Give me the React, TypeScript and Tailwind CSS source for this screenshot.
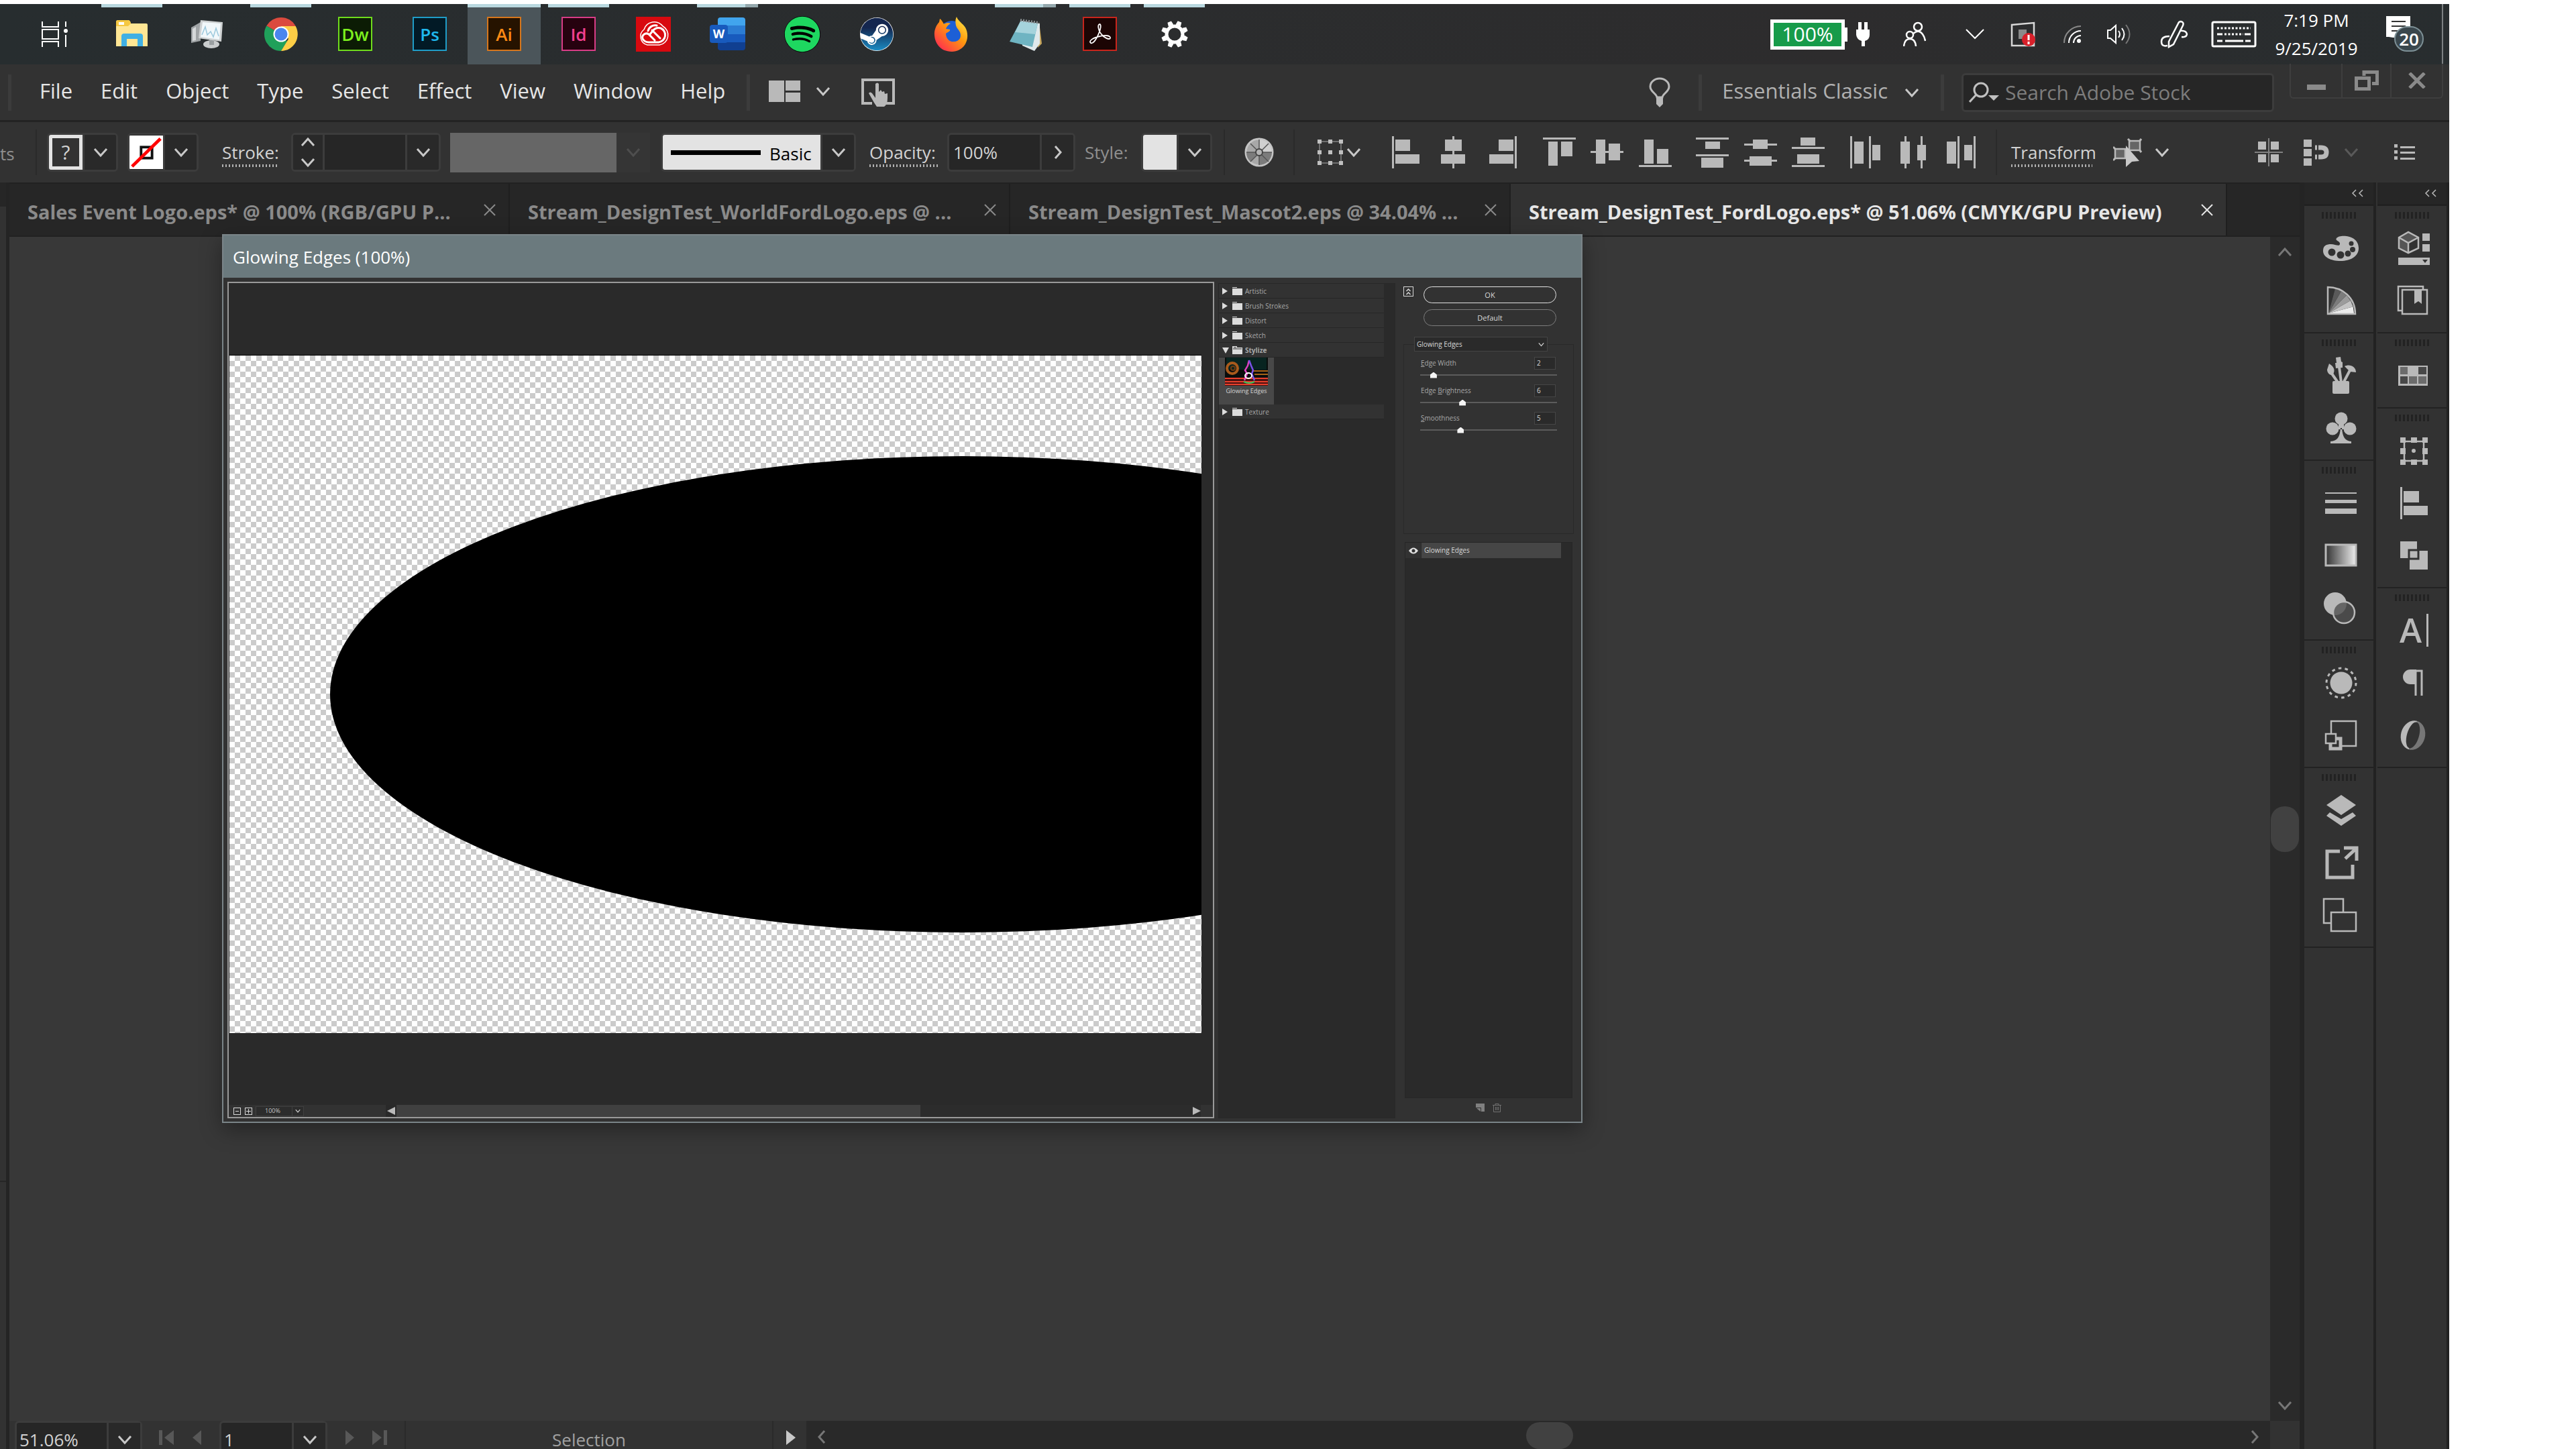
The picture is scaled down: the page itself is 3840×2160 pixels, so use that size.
import type { ReactNode } from 'react';
import { clsx } from 'clsx';
import { FaSpotify, FaSteam } from 'react-icons/fa';

type Rect = [number, number, number, number];

/* ---------- shared bits ---------- */

const CHEVRONS = {
  down: 'M2 6 L11 16 L20 6',
  up: 'M2 16 L11 6 L20 16',
  left: 'M15 2 L7 11 L15 20',
  right: 'M7 2 L15 11 L7 20',
};

function Chevron({ dir = 'down', className = 'size-[22px] text-[#c8c8c8]' }: { dir?: keyof typeof CHEVRONS; className?: string }) {
  return (
    <svg viewBox="0 0 22 22" className={clsx('shrink-0', className)} fill="none" stroke="currentColor" strokeWidth="3" aria-hidden="true">
      <path d={CHEVRONS[dir]} />
    </svg>
  );
}

function Divider({ className }: { className?: string }) {
  return <span className={clsx('shrink-0 w-[2px] h-[68px] bg-[#2a2a2a]', className)} />;
}

function MenuDivider({ className }: { className?: string }) {
  return <span className={clsx('shrink-0 w-[5px] h-[54px] bg-[#3c3c3c]', className)} />;
}

function DottedLabel({ children, className }: { children: ReactNode; className?: string }) {
  return (
    <span className={clsx('shrink-0 flex flex-col pt-1 text-[#d2d2d2]', className)}>
      <span className="leading-9">{children}</span>
      <span className="h-1 bg-[repeating-linear-gradient(90deg,#b0b0b0_0_2px,transparent_2px_5px)]" />
    </span>
  );
}

/* ---------- taskbar ---------- */

function AdobeTile({ text, className }: { text: string; className: string }) {
  return (
    <span className={clsx('size-[51px] border-2 flex items-center justify-center text-[26px] leading-none font-semibold', className)}>
      {text}
    </span>
  );
}

function TaskViewIcon() {
  return (
    <svg className="mr-2" width="44" height="42" viewBox="0 0 44 42" fill="none" stroke="#fff" strokeWidth="2">
      <path d="M3 2v8h24V2M3 40v-8h24v8M3 14h24v14H3zM38 2v8M38 22v18" />
      <circle cx="38" cy="16" r="3" fill="#fff" stroke="none" />
    </svg>
  );
}

function ExplorerIcon() {
  return (
    <svg width="52" height="52" viewBox="0 0 52 52">
      <path d="M2 8q0-3 3-3h15q3 0 4 5h23q2 0 2 2v32H2z" fill="#ffe694" />
      <path d="M2 8q0-3 3-3h15q3 0 4 5l-4 4H2z" fill="#f5c842" />
      <rect x="6" y="8" width="8" height="4" fill="#fff" />
      <path d="M10 44V29q0-4 4-4h24q4 0 4 4v15h-8V33H18v11z" fill="#40b0e4" />
    </svg>
  );
}

function MonitorIcon() {
  return (
    <svg width="52" height="52" viewBox="0 0 52 52">
      <path d="M3 16l14-8v28L3 39z" fill="#9fa3a5" />
      <path d="M5 18l5-3v20l-5 1z" fill="#d5d8d9" />
      <ellipse cx="33" cy="41" rx="12" ry="6" fill="#c9cccd" />
      <path d="M30 34h7v8h-7z" fill="#9a9fa1" />
      <path d="M17 5l33 3-2 29-34-5z" fill="#cfd2d3" />
      <path d="M20 8l27 2-2 24-28-4z" fill="#f2f8fb" />
      <path d="M19 27l5-12 3 12 5-5 4 8 4-13 4 12" fill="none" stroke="#9cc8dc" strokeWidth="1.500" />
    </svg>
  );
}

function ChromeIcon() {
  return (
    <svg width="52" height="52" viewBox="0 0 52 52">
      <path d="M26 26L4.300 13.500A25 25 0 0 1 47.700 13.500z" fill="#db4a3e" />
      <path d="M26 26L4.300 13.500A25 25 0 0 0 26 51l9-14z" fill="#1fa05a" />
      <path d="M26 14h21.700A25 25 0 0 1 26 51l11-18z" fill="#fdce46" />
      <circle cx="26" cy="26" r="11.500" fill="#fff" />
      <circle cx="26" cy="26" r="9.500" fill="#4a86ee" />
    </svg>
  );
}

function CreativeCloudIcon() {
  return (
    <svg width="52" height="52" viewBox="0 0 52 52">
      <rect width="52" height="52" fill="#d8090f" />
      <g fill="none" stroke="#fff" strokeLinecap="round">
        <path d="M28 35l-9-9a6 6 0 0 0-9 7q3 5 9 5h15a11 11 0 0 0 3-21q-7-2-12 4l-4 5" strokeWidth="3" />
        <path d="M24 20l12 12M18 21a11 11 0 0 1 13-8" strokeWidth="3" />
        <path d="M17 42A13 13 0 0 1 12 19 16 16 0 0 1 40 14a15 15 0 0 1-5 28z" strokeWidth="1.500" />
      </g>
    </svg>
  );
}

function WordIcon() {
  return (
    <span className="relative flex items-center w-[53px] h-[49px]">
      <span className="ml-auto w-[41px] h-full rounded-sm overflow-hidden flex flex-col">
        <span className="flex-1 bg-[#41a5ee]" />
        <span className="flex-1 bg-[#2b7cd3]" />
        <span className="flex-1 bg-[#185abd]" />
        <span className="flex-1 bg-[#103f91]" />
      </span>
      <span className="absolute left-0 top-[11px] size-[27px] rounded-sm bg-[#185abd] text-white text-[18px] leading-[26px] font-bold text-center">W</span>
    </span>
  );
}

function FirefoxIcon() {
  return (
    <svg width="52" height="54" viewBox="0 0 52 54">
      <defs>
        <linearGradient id="fox" x1="1" y1="0" x2="0.100" y2="1">
          <stop offset="0" stopColor="#fff24f" />
          <stop offset="0.450" stopColor="#ff980e" />
          <stop offset="1" stopColor="#ff2058" />
        </linearGradient>
      </defs>
      <circle cx="27" cy="27" r="20" fill="#1d5fd6" />
      <path d="M34 1c2 6 9 10 13 16 7 12 3 35-20 36C8 53 0 38 1 24 2 17 5 12 8 9l1-5c2 1 4 4 6 8 3-2 7-2 10-1-4 2-6 5-7 8l6 1c1 3-4 4-6 6 0 8 6 13 12 12 8 0 12-7 9-14-2-4-5-6-6-10-1-5-1-9 1-13z" fill="url(#fox)" />
    </svg>
  );
}

function SteamIcon() {
  return (
    <span className="relative size-[50px] rounded-full bg-white">
      <svg width="0" height="0" className="absolute">
        <linearGradient id="steam" x1="0" y1="0" x2="0" y2="1">
          <stop offset="0.300" stopColor="#14264f" />
          <stop offset="1" stopColor="#1a8cc4" />
        </linearGradient>
      </svg>
      <FaSteam className="size-[50px]" fill="url(#steam)" />
    </span>
  );
}

function NotepadIcon() {
  return (
    <svg width="52" height="52" viewBox="0 0 52 52">
      <path d="M46 8l4 32-6 6z" fill="#c8a860" />
      <path d="M20 6l27 4v30l-8 11-18-8z" fill="#dfe9ec" />
      <path d="M18 7l26 3-8 35L2 37z" fill="#6fb4c2" />
      <path d="M18 7l26 3-4 16-30-3z" fill="#a5d3dc" />
      <path d="M18 5l28 4" stroke="#8b9295" strokeWidth="4" strokeDasharray="2 2" />
    </svg>
  );
}

function AcrobatIcon() {
  return (
    <svg width="51" height="51" viewBox="0 0 51 51">
      <rect x="1" y="1" width="49" height="49" fill="#1c0504" stroke="#c8251c" strokeWidth="2" />
      <path d="M12 39c-4-3 4-8 14-10 8-2 16-1 15 3-1 3-10-1-14-7-4-5-5-13-2-14 3 0 2 8-2 16-3 7-8 14-11 12z" fill="none" stroke="#fff" strokeWidth="1.800" />
    </svg>
  );
}

function GearIcon() {
  const teeth = [0, 45, 90, 135, 180, 225, 270, 315];
  return (
    <svg width="44" height="44" viewBox="0 0 44 44">
      {teeth.map(a => (
        <path key={a} d="M18 8l1-6h6l1 6z" fill="#fff" transform={`rotate(${a + 22} 22 22)`} />
      ))}
      <circle cx="22" cy="22" r="12" fill="none" stroke="#fff" strokeWidth="5" />
    </svg>
  );
}

type TaskItem = { name: string; icon: ReactNode; running?: boolean; stacked?: boolean; active?: boolean };

const TASK_ITEMS: TaskItem[] = [
  { name: 'Task View', icon: <TaskViewIcon /> },
  { name: 'File Explorer', icon: <ExplorerIcon />, running: true },
  { name: 'Resource Monitor', icon: <MonitorIcon /> },
  { name: 'Chrome', icon: <ChromeIcon />, running: true },
  { name: 'Dreamweaver', icon: <AdobeTile text="Dw" className="border-[#6fdc1c] bg-[#0c1c05] text-[#7cf01e]" /> },
  { name: 'Photoshop', icon: <AdobeTile text="Ps" className="border-[#1f9dc8] bg-[#021a26] text-[#1fb8ee]" /> },
  { name: 'Illustrator', icon: <AdobeTile text="Ai" className="border-[#d6761c] bg-[#261300] text-[#ff8a14]" />, active: true },
  { name: 'InDesign', icon: <AdobeTile text="Id" className="border-[#d83c86] bg-[#26020f] text-[#f0408e]" />, running: true },
  { name: 'Creative Cloud', icon: <CreativeCloudIcon /> },
  { name: 'Word', icon: <WordIcon />, stacked: true },
  { name: 'Spotify', icon: <span className="rounded-full bg-black"><FaSpotify className="size-[54px] text-[#1ed760]" /></span> },
  { name: 'Steam', icon: <SteamIcon /> },
  { name: 'Firefox', icon: <FirefoxIcon /> },
  { name: 'Notepad', icon: <NotepadIcon />, stacked: true },
  { name: 'Acrobat', icon: <AcrobatIcon />, running: true },
  { name: 'Settings', icon: <GearIcon />, running: true },
];

function TaskButton({ item }: { item: TaskItem }) {
  return (
    <button aria-label={item.name} className={clsx('w-[109px] h-full flex flex-col items-center', item.active && 'bg-[#4b555a]')}>
      <span className={clsx('flex h-[5px]', item.active ? 'w-full' : 'w-[91px]')}>
        {(item.running || item.active || item.stacked) && <span className="flex-1 bg-[#b9d8df]" />}
        {item.stacked && <span className="w-[19px] bg-[#94a8ad]" />}
      </span>
      <span className="flex-1 flex items-center justify-center pb-1.5">{item.icon}</span>
    </button>
  );
}

function Tray() {
  return (
    <div className="ml-auto h-full flex items-center shrink-0 text-white">
      <span className="w-[111px] h-[45px] border-[5px] border-white bg-[#179b4a] text-[30px] leading-none flex items-center justify-center">100%</span>
      <span className="w-1 h-[21px] bg-white" />
      <svg className="ml-[13px]" width="20" height="36" viewBox="0 0 20 36" fill="#fff">
        <path d="M3 0h5v11h4V0h5v11h3v8q0 7-7 9v8H8v-8q-7-2-8-9v-8h3z" />
      </svg>
      <svg className="ml-[50px]" width="34" height="38" viewBox="0 0 34 38" fill="none" stroke="#fff" strokeWidth="2.500">
        <circle cx="22" cy="8" r="6" />
        <path d="M15 18q8-7 14 1 3 4 4 10" />
        <circle cx="10" cy="20" r="5" />
        <path d="M1 37q1-11 9-11t9 11" />
      </svg>
      <svg className="ml-[59px]" width="28" height="16" viewBox="0 0 28 16" fill="none" stroke="#fff" strokeWidth="2">
        <path d="M1 1l13 13L27 1" />
      </svg>
      <svg className="ml-[39px]" width="38" height="38" viewBox="0 0 38 38">
        <path d="M2 5l33-3v34H2z" fill="none" stroke="#d8d8d8" strokeWidth="2.500" />
        <path d="M12 12h12v14H12z" fill="#8a8a8a" />
        <circle cx="27" cy="27" r="10" fill="#d8202a" />
        <path d="M27 20v8M27 30v4" stroke="#fff" strokeWidth="3" />
      </svg>
      <svg className="ml-[40px]" width="28" height="28" viewBox="0 0 28 28" fill="none" strokeWidth="2">
        <path d="M2 27A25 25 0 0 1 27 2" stroke="#8a8a8a" />
        <path d="M9 27A18 18 0 0 1 27 9M16 27a11 11 0 0 1 11-11" stroke="#fff" />
        <circle cx="24" cy="24" r="3" fill="#fff" />
      </svg>
      <svg className="ml-[37px]" width="38" height="34" viewBox="0 0 38 34" fill="none" stroke="#fff" strokeWidth="2">
        <path d="M2 11h4l8-7v26l-8-7H2z" />
        <path d="M18 12q4 5 0 10M23 8q7 9 0 18" />
        <path d="M29 3q11 14 0 28" stroke="#777" />
      </svg>
      <svg className="ml-[42px]" width="42" height="42" viewBox="0 0 42 42" fill="none" stroke="#fff" strokeWidth="2.500">
        <path d="M31 2q5 1 3 6L20 36l-7 4 0-8L27 5q1-3 4-3z" />
        <path d="M14 24Q2 24 2 32t9 6M29 16q10-1 11 5-1 5-8 4" />
      </svg>
      <svg className="ml-[34px]" width="68" height="40" viewBox="0 0 68 40" fill="none" stroke="#fff" strokeWidth="3">
        <rect x="2" y="2" width="64" height="36" rx="2" />
        <path d="M9 11h50" strokeDasharray="3 2.500" />
        <path d="M20 20h28" strokeDasharray="3 2.500" />
        <path d="M9 20h8M50 20h9M9 30h8M21 30h27M51 30h8" />
      </svg>
      <div className="ml-[19px] w-[140px] text-center text-[26px] leading-[42px]">
        <div>7:19 PM</div>
        <div>9/25/2019</div>
      </div>
      <div className="relative ml-[34px] w-[60px] h-[54px]">
        <svg width="36" height="32" viewBox="0 0 36 32">
          <path d="M0 0h36v32H10l-6-1H0z" fill="#fff" />
          <path d="M8 8h21M8 15h21M8 22h15" stroke="#333" strokeWidth="2" />
        </svg>
        <span className="absolute left-[12px] top-[15px] w-[44px] h-[38px] rounded-full border-2 border-[#7d9096] bg-[#3a474d] text-[26px] leading-[34px] font-semibold text-center">20</span>
      </div>
      <span className="ml-[23px] mr-[9px] w-[2px] h-full bg-[#7c8082]" />
    </div>
  );
}

/* ---------- menu bar ---------- */

const MENUS = ['File', 'Edit', 'Object', 'Type', 'Select', 'Effect', 'View', 'Window', 'Help'];

function MenuBar() {
  return (
    <header className="h-[83px] flex items-center bg-[#323232] text-[31px] leading-10 text-[#e6e6e6]">
      <MenuDivider className="ml-3" />
      <nav className="ml-[42px] flex gap-[42px] pb-1.5">
        {MENUS.map(m => <button key={m}>{m}</button>)}
      </nav>
      <MenuDivider className="ml-[32px]" />
      <button aria-label="Arrange Documents" className="ml-[28px] flex items-center gap-[22px] pb-1">
        <svg width="48" height="32" viewBox="0 0 48 32" fill="#b9b9b9">
          <path d="M0 0h23v32H0zM25 0h22v15H25zM25 18h22v14H25z" />
        </svg>
        <Chevron />
      </button>
      <button aria-label="Touch Workspace" className="ml-[46px]">
        <svg width="50" height="44" viewBox="0 0 50 44">
          <path d="M16 38H2V3h46v35H37" fill="none" stroke="#b9b9b9" strokeWidth="4" />
          <path d="M21 9q3-3 5 0v12l3-3 2 3 3-1 1 4 4-1v7q0 10-5 13H23l-4-6-8-14q2-3 5 0l5 7z" fill="#b9b9b9" />
        </svg>
      </button>
      <div className="ml-auto flex items-center">
        <svg width="32" height="46" viewBox="0 0 32 46">
          <path d="M12 30C11 24 2 22 2 14a14 12 0 0 1 28 0c0 8-9 10-10 16z" fill="none" stroke="#b9b9b9" strokeWidth="3" />
          <path d="M11 30h10v10l-5 5-5-5z" fill="#b9b9b9" />
        </svg>
        <MenuDivider className="ml-[42px]" />
        <button className="ml-[30px] flex items-center gap-[25px] text-[#b0b0b0]">
          <span className="pb-1.5 min-w-[246px] whitespace-nowrap text-left">Essentials Classic</span>
          <Chevron />
        </button>
        <MenuDivider className="ml-[32px]" />
        <label className="ml-[26px] w-[466px] h-[58px] flex items-center rounded-md border-[3px] border-[#3c3c3c] bg-[#262626]">
          <svg className="ml-[8px] shrink-0" width="46" height="32" viewBox="0 0 46 32">
            <circle cx="18" cy="12" r="10" fill="none" stroke="#c0c0c0" strokeWidth="3" />
            <path d="M11 19L1 30" stroke="#c0c0c0" strokeWidth="3" />
            <path d="M29 20h16l-8 8z" fill="#c0c0c0" />
          </svg>
          <input aria-label="Search Adobe Stock" placeholder="Search Adobe Stock" className="ml-2 min-w-0 flex-1 text-[30px] bg-transparent outline-none placeholder:text-[#7d7d7d]" />
        </label>
        <div className="ml-[23px] mr-[9px] self-start -mt-[14px] h-[52px] flex border-2 border-t-0 border-[#3e3e3e] rounded-b-md">
          <button aria-label="Minimize" className="w-[75px] flex items-center justify-center pt-5">
            <span className="w-7 h-2 bg-[#8a8a8a]" />
          </button>
          <button aria-label="Restore" className="w-[75px] flex items-center justify-center border-x-2 border-[#3e3e3e]">
            <svg width="36" height="30" viewBox="0 0 36 30" fill="none" stroke="#8a8a8a" strokeWidth="5">
              <path d="M14 8V2.500h19.500v17H26M2.500 11.500h19v16h-19z" />
            </svg>
          </button>
          <button aria-label="Close" className="w-[75px] flex items-center justify-center">
            <svg width="28" height="24" viewBox="0 0 28 24" stroke="#8a8a8a" strokeWidth="5">
              <path d="M3 1l22 22M25 1L3 23" />
            </svg>
          </button>
        </div>
      </div>
    </header>
  );
}

/* ---------- control bar ---------- */

// bars of the align and distribute icons, on a 50 x 50 grid
const ALIGN_GROUPS: { name: string; rects: Rect[] }[][] = [
  [
    { name: 'Horizontal Align Left', rects: [[4, 1, 3, 48], [9, 6, 22, 17], [9, 28, 36, 14]] },
    { name: 'Horizontal Align Center', rects: [[22, 1, 3, 48], [11, 6, 25, 17], [5, 28, 36, 14]] },
    { name: 'Horizontal Align Right', rects: [[43, 1, 3, 48], [19, 6, 22, 17], [5, 28, 36, 14]] },
  ],
  [
    { name: 'Vertical Align Top', rects: [[1, 3, 49, 3], [9, 9, 14, 36], [28, 9, 17, 22]] },
    { name: 'Vertical Align Center', rects: [[0, 23, 49, 3], [8, 6, 14, 36], [27, 12, 17, 25]] },
    { name: 'Vertical Align Bottom', rects: [[0, 44, 49, 3], [8, 6, 14, 36], [27, 20, 17, 22]] },
  ],
  [
    { name: 'Vertical Distribute Top', rects: [[1, 3, 49, 3], [1, 28, 49, 3], [15, 9, 22, 11], [9, 33, 33, 15]] },
    { name: 'Vertical Distribute Center', rects: [[1, 12, 49, 3], [1, 36, 49, 3], [14, 6, 22, 14], [9, 31, 33, 14]] },
    { name: 'Vertical Distribute Bottom', rects: [[0, 17, 49, 3], [0, 44, 49, 3], [13, 3, 22, 12], [8, 28, 33, 14]] },
  ],
  [
    { name: 'Horizontal Distribute Left', rects: [[3, 1, 3, 48], [31, 1, 3, 48], [9, 9, 14, 33], [36, 14, 12, 23]] },
    { name: 'Horizontal Distribute Center', rects: [[12, 1, 3, 48], [36, 1, 3, 48], [6, 9, 14, 33], [31, 14, 13, 23]] },
    { name: 'Horizontal Distribute Right', rects: [[19, 1, 3, 48], [43, 1, 3, 48], [3, 9, 14, 33], [29, 14, 12, 23]] },
  ],
];

const FIELD = 'shrink-0 h-[58px] flex items-center rounded-md border-[3px] border-[#3c3c3c] bg-[#262626] overflow-hidden';
const DROP = 'shrink-0 h-full w-[50px] flex items-center justify-center border-l-[3px] border-[#3c3c3c] bg-[#292929]';

function ControlBar() {
  return (
    <div className="h-[93px] flex items-center border-t-[3px] border-[#232323] bg-[#323232] text-[26px] leading-9 text-[#d2d2d2]">
      <span className="shrink-0 w-[53px] pt-1 text-[#8f8f8f]">ts</span>
      <Divider />
      <button aria-label="Fill" className={clsx(FIELD, 'ml-[15px] w-[106px]')}>
        <span className="flex-1 h-full border-[5px] border-[#e3e3e3] bg-[#323232] text-[30px] leading-[42px] text-center">?</span>
        <span className={DROP}><Chevron /></span>
      </button>
      <button aria-label="Stroke color" className={clsx(FIELD, 'ml-[14px] w-[106px]')}>
        <svg className="flex-1 bg-white" viewBox="0 0 52 52">
          <rect x="18" y="18" width="17" height="17" fill="none" stroke="#111" strokeWidth="4" />
          <path d="M4 48L48 5" stroke="#f00" strokeWidth="5" />
        </svg>
        <span className={DROP}><Chevron /></span>
      </button>
      <DottedLabel className="ml-[35px] w-[85px]">Stroke:</DottedLabel>
      <div className={clsx(FIELD, 'ml-[18px] w-[223px]')}>
        <span className="w-[47px] h-full flex flex-col items-center justify-between border-r-[3px] border-[#3c3c3c] bg-[#292929]">
          <Chevron dir="up" />
          <Chevron />
        </span>
        <input aria-label="Stroke weight" className="min-w-0 flex-1 bg-transparent outline-none" />
        <span className={DROP}><Chevron /></span>
      </div>
      <button aria-label="Variable width profile" className="shrink-0 ml-[14px] h-[59px] flex bg-[#353535]">
        <span className="w-[248px] h-full bg-[#666]" />
        <span className="w-[50px] h-full flex items-center justify-center">
          <Chevron className="size-[22px] text-[#4e4e4e]" />
        </span>
      </button>
      <button aria-label="Brush definition" className={clsx(FIELD, 'ml-[16px] w-[291px] text-black')}>
        <span className="flex-1 h-full flex items-center gap-[13px] pl-[12px] bg-[#e3e3e3]">
          <span className="w-[134px] h-[7px] bg-black" />
          <span className="pt-1">Basic</span>
        </span>
        <span className={DROP}><Chevron /></span>
      </button>
      <DottedLabel className="ml-[20px] w-[102px]">Opacity:</DottedLabel>
      <div className={clsx(FIELD, 'ml-[14px] w-[191px]')}>
        <input aria-label="Opacity" defaultValue="100%" className="min-w-0 flex-1 pl-1.5 bg-transparent outline-none" />
        <button aria-label="Opacity slider" className={DROP}><Chevron dir="right" /></button>
      </div>
      <span className="shrink-0 ml-[14px] w-[70px] text-[#8f8f8f]">Style:</span>
      <button aria-label="Graphic style" className={clsx(FIELD, 'ml-[14px] w-[106px]')}>
        <span className="flex-1 h-full bg-[#e3e3e3]" />
        <span className={DROP}><Chevron /></span>
      </button>
      <Divider className="ml-[17px]" />
      <svg className="shrink-0 ml-[29px]" width="45" height="45" viewBox="0 0 45 45">
        <circle cx="22" cy="22" r="20" fill="#a8a8a8" stroke="#c4c4c4" strokeWidth="3" />
        <path d="M22 22V3A19 19 0 0 1 41 22z" fill="#d0d0d0" />
        <path d="M22 22H41A19 19 0 0 1 22 41zM22 22L9 36A19 19 0 0 1 3 22z" fill="#7c7c7c" />
        <path d="M22 3v38M3 22h38M9 9l27 27M36 9L9 36" stroke="#555" strokeWidth="1.500" />
        <circle cx="22" cy="22" r="5" fill="#b4b4b4" stroke="#444" strokeWidth="2" />
      </svg>
      <Divider className="ml-[28px]" />
      <button aria-label="Align To" className="shrink-0 ml-[33px] flex items-center gap-1">
        <svg width="40" height="40" viewBox="0 0 40 40">
          <rect x="4" y="4" width="32" height="32" fill="none" stroke="#707070" strokeWidth="2" />
          <path d="M1 1h6v6H1zM17 1h6v6h-6zM33 1h6v6h-6zM1 17h6v6H1zM17 17h6v6h-6zM33 17h6v6h-6zM1 33h6v6H1zM17 33h6v6h-6zM33 33h6v6h-6z" fill="#c0c0c0" />
        </svg>
        <Chevron />
      </button>
      <div className="shrink-0 ml-[42px] flex gap-[34px]">
        {ALIGN_GROUPS.map((group, i) => (
          <div key={i} className="flex gap-[22px]">
            {group.map(({ name, rects }) => (
              <button key={name} aria-label={name}>
                <svg width="50" height="50" viewBox="0 0 50 50" fill="#b9b9b9">
                  {rects.map(([x, y, w, h], j) => <rect key={j} x={x} y={y} width={w} height={h} />)}
                </svg>
              </button>
            ))}
          </div>
        ))}
      </div>
      <Divider className="ml-[26px]" />
      <DottedLabel className="ml-[21px] w-[121px]">Transform</DottedLabel>
      <button aria-label="Isolate" className="shrink-0 ml-[31px] flex items-center gap-[18px]">
        <svg width="44" height="44" viewBox="0 0 44 44">
          <path d="M24 5h16v14H24zM3 17h15v14H3z" fill="#666" stroke="#b9b9b9" strokeWidth="2.500" />
          <path d="M22 2l4 4M42 2l-3 4M42 22l-3-4M0 14l4 4M0 34l4-4" stroke="#b9b9b9" strokeWidth="3" />
          <path d="M19 12l20 23-11 1-9 8z" fill="#c8c8c8" />
        </svg>
        <Chevron />
      </button>
      <div className="shrink-0 ml-auto mr-[51px] flex items-center">
        <svg width="42" height="42" viewBox="0 0 42 42" fill="#b9b9b9">
          <path d="M5 5h12v12H5zM24 5h12v12H24zM5 24h12v12H5zM24 24h12v12H24z" />
          <path d="M20 0h2v42h-2zM0 20h42v2H0z" fill="#808080" />
        </svg>
        <svg className="ml-[31px]" width="40" height="40" viewBox="0 0 40 40" fill="#b9b9b9">
          <path d="M0 1h12v11H0zM0 15h12v11H0zM0 29h12v11H0z" />
          <path d="M17 13h9q8 0 8 7t-8 7h-9" fill="none" stroke="#b9b9b9" strokeWidth="7" />
          <path d="M21 9v22" stroke="#323232" strokeWidth="2" />
        </svg>
        <Chevron className="ml-[20px] size-[22px] text-[#5a5a5a]" />
        <svg className="ml-[53px]" width="31" height="24" viewBox="0 0 31 24" fill="#b9b9b9">
          <path d="M0 0h5v5H0zM0 9h5v5H0zM0 18h5v5H0zM9 3h22v3H9zM9 11h22v3H9zM9 20h22v3H9z" />
        </svg>
      </div>
    </div>
  );
}

/* ---------- document tabs ---------- */

const TABS = [
  'Sales Event Logo.eps* @ 100% (RGB/GPU P...',
  'Stream_DesignTest_WorldFordLogo.eps @ ...',
  'Stream_DesignTest_Mascot2.eps @ 34.04% ...',
  'Stream_DesignTest_FordLogo.eps* @ 51.06% (CMYK/GPU Preview)',
];

function DocumentTabs() {
  return (
    <div className="h-[81px] shrink-0 flex border-y-2 border-[#212121] bg-[#262626] text-[29px] leading-10 font-bold">
      {TABS.map((tab, i) => {
        const active = i === TABS.length - 1;
        return (
          <div
            key={tab}
            className={clsx(
              'shrink-0 flex items-center justify-between border-r-2 border-[#1f1f1f] pl-[27px] pr-[19px]',
              active ? 'w-[1068px] bg-[#323232] text-[#e6e6e6]' : 'w-[746px] text-[#8a8a8a]',
            )}
          >
            <button className="pt-1.5 whitespace-nowrap">{tab}</button>
            <button aria-label="Close tab">
              <svg width="18" height="18" viewBox="0 0 18 18" stroke="currentColor" strokeWidth="2">
                <path d="M1 1l16 16M17 1L1 17" />
              </svg>
            </button>
          </div>
        );
      })}
    </div>
  );
}

/* ---------- status bar ---------- */

function PickerField({ label, value, className }: { label: string; value: string; className: string }) {
  return (
    <label className={clsx('shrink-0 h-full flex rounded-t-md border-[3px] border-b-0 border-[#3c3c3c] bg-[#262626]', className)}>
      <select aria-label={label} className="flex-1 min-w-0 appearance-none bg-transparent pl-1 pt-[11px] leading-7 text-[#d2d2d2] outline-none">
        <option>{value}</option>
      </select>
      <span className="w-[50px] flex justify-center pt-[14px] border-l-[3px] border-[#3c3c3c] bg-[#292929]"><Chevron /></span>
    </label>
  );
}

function StatusBar() {
  return (
    <footer className="h-[42px] shrink-0 flex items-start bg-[#323232] text-[26px] leading-7">
      <PickerField label="Zoom" value="51.06%" className="ml-2 w-[190px]" />
      <svg className="shrink-0 ml-[25px] mt-[14px]" width="66" height="22" viewBox="0 0 66 22" fill="#585858">
        <path d="M0 0h5v22H0zM22 0v22L8 11zM63 0v22L50 11z" />
      </svg>
      <PickerField label="Artboard" value="1" className="ml-[24px] w-[161px]" />
      <svg className="shrink-0 ml-[27px] mt-[14px]" width="66" height="22" viewBox="0 0 66 22" fill="#585858">
        <path d="M0 0l13 11L0 22zM40 0l14 11-14 11zM57 0h5v22h-5z" />
      </svg>
      <div className="ml-[22px] w-[550px] h-full shrink-0 flex items-end justify-center border-x-2 border-[#2a2a2a] text-[#a0a0a0]">Selection</div>
      <svg className="shrink-0 ml-[19px] mr-[16px] mt-[14px]" width="14" height="22" viewBox="0 0 14 22" fill="#c8c8c8">
        <path d="M0 0l14 11L0 22z" />
      </svg>
      <div className="flex-1 h-full flex items-start bg-[#292929] pl-[12px] pr-[12px]">
        <Chevron dir="left" className="mt-[13px] size-[22px] text-[#777]" />
        <span className="grow-[31]" />
        <span className="w-[70px] h-[40px] mt-0.5 rounded-[20px] bg-[#414141]" />
        <span className="grow-[30]" />
        <Chevron dir="right" className="mt-[13px] size-[22px] text-[#777]" />
      </div>
      <span className="w-[44px] h-full shrink-0 bg-[#323232]" />
    </footer>
  );
}

/* ---------- docked panels ---------- */

function PanelIcon({ children }: { children: ReactNode }) {
  return (
    <svg width="56" height="56" viewBox="0 0 56 56" fill="#b9b9b9" className="overflow-visible">
      {children}
    </svg>
  );
}

const WEDGES = ['#ececec', '#c4c4c4', '#9c9c9c', '#7c7c7c', '#5a5a5a', '#333'];

function wedge(i: number) {
  const at = (deg: number) => {
    const r = (deg * Math.PI) / 180;
    return `${9 + 38 * Math.cos(r)} ${47 - 38 * Math.sin(r)}`;
  };
  return `M9 47L${at(i * 15)}L${at(i * 15 + 15)}z`;
}

const LINE = { fill: 'none', stroke: '#b9b9b9' };

type Tool = { name: string; art: ReactNode };

const LEFT_DOCK: Tool[][] = [
  [
    {
      name: 'Color',
      art: (
        <>
          <path d="M21 13C26 7 54 8 54 28c0 12-12 19-27 19C12 47 1 41 1 32c0-8 5-10 12-10 6 0 12 4 13 0 1-5-8-5-5-9z" />
          <g fill="#323232">
            <circle cx="14" cy="34" r="5.500" /><circle cx="27" cy="38" r="5.500" /><circle cx="38" cy="36" r="4.500" />
            <circle cx="45" cy="30" r="4" /><circle cx="43" cy="21" r="3.500" />
          </g>
        </>
      ),
    },
    {
      name: 'Color Guide',
      art: (
        <>
          {WEDGES.map((fill, i) => <path key={fill} d={wedge(i)} fill={fill} />)}
          <path d="M8 8v40h41C49 24 30 8 8 8z" {...LINE} strokeWidth="2.500" />
        </>
      ),
    },
  ],
  [
    {
      name: 'Brushes',
      art: (
        <>
          <rect x="15" y="36" width="25" height="19" rx="2" />
          <path d="M20 1l7-1 1 7 2 1v8l-10 1-1-8h2z" />
          <path d="M10 10c8 5 9 10 6 16-4 3-9-2-9-7zM33 14c7-4 17 0 17 9l-9-1z" />
          <path d="M14 25l9 13M25 15l3 23M41 20l-9 17" {...LINE} strokeWidth="4" />
        </>
      ),
    },
    {
      name: 'Symbols',
      art: (
        <>
          <circle cx="28" cy="14" r="9.500" /><circle cx="15" cy="29" r="9.500" /><circle cx="41" cy="29" r="9.500" />
          <path d="M24 22h8v8h-8zM27 28c-1 14-5 19-15 20v3h31v-3c-9-1-13-6-14-20z" />
        </>
      ),
    },
  ],
  [
    { name: 'Stroke', art: <path d="M4 12h47v2H4zM4 23h47v5H4zM4 36h47v8H4z" /> },
    {
      name: 'Gradient',
      art: (
        <>
          <linearGradient id="ramp"><stop offset="0" stopColor="#333" /><stop offset="1" stopColor="#eee" /></linearGradient>
          <rect x="5" y="12" width="45" height="31" fill="url(#ramp)" stroke="#b9b9b9" strokeWidth="3" />
        </>
      ),
    },
    {
      name: 'Transparency',
      art: (
        <>
          <circle cx="19" cy="22" r="17" />
          <circle cx="32" cy="35" r="16" fill="#505050" fillOpacity="0.800" stroke="#b9b9b9" strokeWidth="2.500" />
        </>
      ),
    },
  ],
  [
    {
      name: 'Appearance',
      art: (
        <>
          <circle cx="28" cy="28" r="16.500" />
          <circle cx="28" cy="28" r="22" {...LINE} strokeWidth="3" strokeDasharray="4.600 5.270" />
        </>
      ),
    },
    {
      name: 'Graphic Styles',
      art: (
        <>
          <rect x="13" y="7" width="37" height="37" {...LINE} strokeWidth="2.500" />
          <rect x="12" y="33" width="15" height="15" fill="#323232" stroke="#b9b9b9" strokeWidth="5" />
          <rect x="5" y="26" width="15" height="14" fill="#323232" stroke="#b9b9b9" strokeWidth="2.500" />
        </>
      ),
    },
  ],
  [
    { name: 'Layers', art: <path d="M28 5l22 15-22 15L6 20zM6 36l5-5 17 10 17-10 5 5-22 15z" /> },
    { name: 'Asset Export', art: <path d="M26 11H7v39h38V31M32 6h19v19M34 22L49 8" {...LINE} strokeWidth="5" /> },
    {
      name: 'Artboards',
      art: (
        <>
          <rect x="2" y="4" width="29" height="36" {...LINE} strokeWidth="2.500" />
          <rect x="13" y="24" width="37" height="28" fill="#323232" stroke="#b9b9b9" strokeWidth="2.500" />
        </>
      ),
    },
  ],
];

const RIGHT_DOCK: Tool[][] = [
  [
    {
      name: 'Properties',
      art: (
        <>
          <path d="M5 12l14-8 15 8-15 8zM5 12v16l14 7V20z" fill="#555" />
          <path d="M5 12l14-8 15 8v16l-15 7-14-7zM5 12l14 8 15-8M19 20v15" {...LINE} strokeWidth="2.500" />
          <path d="M40 6h11v11H40zM40 22h11v11H40zM4 42h47v11H4z" />
          <path d="M40 45h8l-4 5z" fill="#323232" />
        </>
      ),
    },
    {
      name: 'Libraries',
      art: (
        <>
          <path d="M9 43H4V7h37v5M10 12h37v36H10z" {...LINE} strokeWidth="2.500" />
          <path d="M28 12h11v21l-5-4-6 4z" />
        </>
      ),
    },
  ],
  [
    {
      name: 'Swatches',
      art: (
        <>
          <path d="M4 13h44v30H4z" />
          <path d="M7 15h11v11H7zM34 29h12v11H34zM20 29h12v11H20z" fill="#6c6c6c" />
          <path d="M34 15h12v11H34zM7 29h11v11H7z" fill="#484848" />
        </>
      ),
    },
  ],
  [
    {
      name: 'Transform',
      art: (
        <>
          <rect x="13" y="14" width="29" height="29" {...LINE} strokeWidth="2.500" />
          <path d="M7 8h8v8H7zM23 8h9v8h-9zM40 8h8v8h-8zM7 24h8v9H7zM40 24h8v9h-8zM7 41h8v8H7zM23 41h9v8h-9zM40 41h8v8h-8z" />
          <circle cx="27" cy="28" r="3" />
        </>
      ),
    },
    { name: 'Align', art: <path d="M7 4h3v48H7zM12 10h23v17H12zM12 32h36v14H12z" /> },
    {
      name: 'Pathfinder',
      art: (
        <>
          <path d="M7 7h25v25H7zM21 21h27v28H21z" />
          <rect x="20" y="20" width="14" height="13" stroke="#323232" strokeWidth="3" />
        </>
      ),
    },
  ],
  [
    {
      name: 'Character',
      art: (
        <>
          <text x="6" y="46" fontSize="50" fontWeight="600">A</text>
          <path d="M46 3h3v49h-3z" />
        </>
      ),
    },
    {
      name: 'Paragraph',
      art: (
        <>
          <path d="M22 8h9v22h-9a11 11 0 0 1 0-22z" />
          <path d="M30 47V10h9v37" {...LINE} strokeWidth="3" />
        </>
      ),
    },
    {
      name: 'OpenType',
      art: (
        <g transform="rotate(16 26 28)">
          <path d="M26 6a18 22 0 0 0 0 44v-2a9 20 0 0 1 0-40z" />
          <path d="M26 6a18 22 0 0 1 0 44v-2a9 20 0 0 0 0-40z" fill="#777" />
        </g>
      ),
    },
  ],
];

function Dock({ groups }: { groups: Tool[][] }) {
  return (
    <div className="flex-1 flex flex-col border-r-[4px] border-[#222]">
      <div className="h-[35px] shrink-0 flex items-center justify-end pr-[13px] border-b-[3px] border-[#212121] bg-[#262626]">
        <svg width="20" height="12" viewBox="0 0 20 12" fill="none" stroke="#b9b9b9" strokeWidth="1.500">
          <path d="M7 1L2 6l5 5M17 1l-5 5 5 5" />
        </svg>
      </div>
      {groups.map((tools, i) => (
        <div key={i} className="shrink-0 flex flex-col items-center border-b-2 border-[#222] pb-[8px]">
          <span className="mt-[9px] mb-[5px] w-[52px] h-[10px] bg-[repeating-linear-gradient(90deg,#222_0_3px,transparent_3px_6px)]" />
          {tools.map(tool => (
            <button key={tool.name} aria-label={tool.name} className="h-[78px] flex items-center pl-1.5">
              <PanelIcon>{tool.art}</PanelIcon>
            </button>
          ))}
        </div>
      ))}
    </div>
  );
}

/* ---------- filter gallery dialog ---------- */

function CategoryRow({ name, open }: { name: string; open?: boolean }) {
  return (
    <button className={clsx('w-full h-[22px] flex items-center border-b border-[#262626] bg-[#323232] pl-[5px] text-[#a8a8a8]', open && 'font-bold')}>
      <svg width="10" height="10" viewBox="0 0 10 10" fill="#dcdcdc">
        <path d={open ? 'M0 1h10L5 10z' : 'M0 0l8 5-8 5z'} />
      </svg>
      <svg className="ml-[5px] mr-1" width="15" height="12" viewBox="0 0 15 12">
        <path d="M0 0h7v2h8v10H0z" fill="#dcdcdc" />
        {open ? <path d="M1 4h13M2 2h4" stroke="#323232" /> : <path d="M0 1.500h7" stroke="#323232" strokeWidth="1" />}
      </svg>
      {name}
    </button>
  );
}

function FilterThumb() {
  return (
    <svg width="64" height="42" viewBox="0 0 64 42">
      <rect width="64" height="42" fill="#0a0d0c" />
      <path d="M2 0h60v18H2z" fill="#082420" />
      <path d="M0 30h64v12H0z" fill="#4a1010" />
      <g fill="none">
        <circle cx="11" cy="16" r="8" stroke="#a85a1c" strokeWidth="4" />
        <circle cx="12" cy="16" r="3" stroke="#6d3a10" strokeWidth="2" />
        <path d="M0 31h64M0 36h64M0 40h64" stroke="#e8402c" strokeWidth="2" />
        <path d="M40 20h24M44 25h20" stroke="#d8801c" strokeWidth="1.500" />
        <path d="M36 4l-2 8-4 7 3 5-4 10" stroke="#e040c0" strokeWidth="2.500" />
        <path d="M36 4l3 8 3 7-2 5 4 10" stroke="#7a50e8" strokeWidth="2.500" />
        <path d="M28 36q8 4 16 0" stroke="#3cc860" strokeWidth="2" />
        <ellipse cx="35" cy="27" rx="5" ry="4" stroke="#fff" strokeWidth="2" />
      </g>
    </svg>
  );
}

const PARAMS = [
  { id: 'edge-width', before: '', key: 'E', after: 'dge Width', value: 2, min: 1, max: 14 },
  { id: 'edge-brightness', before: 'Edge ', key: 'B', after: 'rightness', value: 6, min: 0, max: 20 },
  { id: 'smoothness', before: '', key: 'S', after: 'moothness', value: 5, min: 1, max: 15 },
];

function FilterGallery() {
  return (
    <section
      role="dialog"
      aria-label="Glowing Edges"
      className="absolute left-[331px] top-[349px] w-[2028px] h-[1325px] flex flex-col border-2 border-[#7a8488] bg-[#323232] shadow-[0_10px_30px_rgba(0,0,0,0.35)] text-[10px] leading-[14px] text-[#d8d8d8]"
    >
      <h1 className="h-[63px] shrink-0 bg-[#6b7a7e] pl-[14px] text-[26px] leading-[64px] text-white">Glowing Edges (100%)</h1>
      <div className="flex-1 min-h-0 flex pl-1.5 pt-1.5 pb-[5px]">
        {/* Preview */}
        <div className="w-[1471px] shrink-0 flex flex-col border-2 border-[#999] bg-[#2a2a2a]">
          <div className="mt-[107px] ml-px mr-[17px] h-[1011px] border-t border-black bg-[conic-gradient(#cbcbcb_25%,#fff_0_50%,#cbcbcb_0_75%,#fff_0)] bg-[length:16px_16px]">
            <svg className="w-full h-full" viewBox="0 0 1449 1010" preserveAspectRatio="xMinYMin slice">
              <ellipse cx="1093" cy="505" rx="943" ry="355" />
            </svg>
          </div>
          <div className="mt-auto h-[18px] flex items-center bg-[#323232]">
            <button aria-label="Zoom out" className="ml-[7px] size-[11px] border border-[#d8d8d8] flex items-center justify-center"><span className="w-[5px] h-px bg-[#d8d8d8]" /></button>
            <button aria-label="Zoom in" className="ml-[6px] size-[11px] border border-[#d8d8d8] flex items-center justify-center">
              <svg width="7" height="7" viewBox="0 0 7 7" stroke="#d8d8d8"><path d="M3.500 0v7M0 3.500h7" /></svg>
            </button>
            <label className="ml-[5px] w-[72px] h-[15px] flex items-center border border-[#404040] bg-[#2c2c2c]">
              <select aria-label="Preview zoom" className="flex-1 min-w-0 appearance-none bg-transparent pl-[13px] text-[9px] leading-3 text-[#c0c0c0] outline-none"><option>100%</option></select>
              <span className="w-[17px] h-full flex items-center justify-center border-l border-[#404040]"><Chevron className="size-2" /></span>
            </label>
            <div className="ml-[122px] mr-[18px] flex-1 h-full flex items-center">
              <span className="w-[16px] h-full bg-[#292929] flex items-center justify-center"><svg width="12" height="12" viewBox="0 0 12 12" fill="#b9b9b9"><path d="M12 0v12L0 6z" /></svg></span>
              <span className="w-[781px] h-full bg-[#404040]" />
              <span className="flex-1 h-full bg-[#2c2c2c] flex items-center justify-end"><svg width="12" height="12" viewBox="0 0 12 12" fill="#b9b9b9"><path d="M0 0v12l12-6z" /></svg></span>
            </div>
          </div>
        </div>

        {/* Filter categories */}
        <div className="ml-[6px] mt-[2px] w-[264px] shrink-0 border border-[#282828] bg-[#2a2a2a] pr-[16px]">
          {['Artistic', 'Brush Strokes', 'Distort', 'Sketch'].map(name => <CategoryRow key={name} name={name} />)}
          <CategoryRow name="Stylize" open />
          <button className="w-[82px] h-[70px] flex flex-col items-center bg-[#484848] text-[9px] leading-4">
            <FilterThumb />
            Glowing Edges
          </button>
          <CategoryRow name="Texture" />
        </div>

        {/* Settings */}
        <div className="ml-[12px] w-[254px] shrink-0 flex flex-col">
          <div className="flex pt-[7px]">
            <button aria-label="Collapse categories" className="size-[15px] border border-[#d8d8d8]">
              <svg viewBox="0 0 13 13" fill="none" stroke="#d8d8d8" strokeWidth="1.500"><path d="M3.500 6l3-3 3 3M3.500 11l3-3 3 3" /></svg>
            </button>
            <div className="ml-[15px] w-[198px] flex flex-col gap-[9px] text-[11px]">
              <button className="h-[25px] rounded-full border border-[#e0e0e0]">OK</button>
              <button className="h-[25px] rounded-full border border-[#7c7c7c]">Default</button>
            </div>
          </div>
          <fieldset className="relative mt-[27px] h-[283px] border border-[#292929] pl-[24px] pt-[16px]">
            <label className="absolute left-[15px] -top-[12px] w-[199px] h-[22px] flex items-center border border-[#444] bg-[#2a2a2a] pr-1">
              <select aria-label="Filter" className="flex-1 min-w-0 appearance-none bg-transparent pl-[3px] outline-none"><option>Glowing Edges</option></select>
              <Chevron className="size-[9px]" />
            </label>
            {PARAMS.map(p => (
              <div key={p.id} className="h-[41px] w-[204px]">
                <div className="flex items-center justify-between h-[22px] pl-px pr-[2px]">
                  <label htmlFor={p.id} className="text-[#a8a8a8]">{p.before}<u>{p.key}</u>{p.after}</label>
                  <input aria-label={p.id} defaultValue={p.value} className="w-[32px] h-[19px] border border-[#464646] bg-[#2a2a2a] pl-[3px] outline-none" />
                </div>
                <input
                  id={p.id}
                  type="range"
                  min={p.min}
                  max={p.max}
                  defaultValue={p.value}
                  className="block w-full h-[14px] appearance-none bg-transparent bg-[linear-gradient(#5c5c5c,#5c5c5c)] bg-[length:100%_2px] bg-center bg-no-repeat [&::-webkit-slider-thumb]:appearance-none [&::-webkit-slider-thumb]:w-[10px] [&::-webkit-slider-thumb]:h-[9px] [&::-webkit-slider-thumb]:bg-[#f4f4f4] [&::-webkit-slider-thumb]:[clip-path:polygon(50%_0,100%_45%,100%_100%,0_100%,0_45%)]"
                />
              </div>
            ))}
          </fieldset>
          <div className="mt-[12px] mx-[2px] h-[829px] border border-[#262626] bg-[#2a2a2a]">
            <div className="h-[23px] flex pr-[16px]">
              <button aria-label="Toggle effect" className="w-[23px] flex items-center justify-center bg-[#323232]">
                <svg width="14" height="10" viewBox="0 0 14 10"><path d="M0 5q7-9 14 0-7 9-14 0z" fill="#e0e0e0" /><circle cx="7" cy="5" r="2.500" fill="#323232" /></svg>
              </button>
              <span className="ml-px flex-1 bg-[#464646] pl-[4px] leading-[22px]">Glowing Edges</span>
            </div>
          </div>
          <div className="mt-[8px] flex justify-center gap-[12px]">
            <svg width="13" height="12" viewBox="0 0 13 12"><path d="M0 0h13v12H8V6H0z" fill="#808080" /><path d="M1 7h6v5z" fill="#808080" /></svg>
            <svg width="13" height="13" viewBox="0 0 13 13" fill="none" stroke="#707070"><path d="M0 2.500h13M4 2V.500h5V2M1.500 3v9.500h10V3M4.500 5v5M6.500 5v5M8.500 5v5" /></svg>
          </div>
        </div>
      </div>
    </section>
  );
}

/* ---------- app ---------- */

export default function App() {
  return (
    <div className="h-screen overflow-hidden bg-white pt-1.5 pr-[189px] font-['Open_Sans','Noto_Sans',sans-serif]">
      <div className="h-full flex flex-col bg-[#323232]">
        <div className="h-[90px] shrink-0 flex items-center bg-linear-to-r from-[#272d2f] via-[#2d2c2d] via-75% to-[#282d2f] pl-[31px]">
          <div className="h-full flex gap-[2px]">
            {TASK_ITEMS.map(item => <TaskButton key={item.name} item={item} />)}
          </div>
          <Tray />
        </div>
        <MenuBar />
        <ControlBar />
        <div className="flex-1 min-h-0 flex">
          <div className="w-[14px] shrink-0 flex flex-col border-r-[5px] border-[#242424] bg-[#323232]">
            <span className="h-[34px] bg-[#262626]" />
            <span className="h-[1456px] border-y-2 border-[#262626]" />
          </div>
          <main className="flex-1 min-w-0 flex flex-col">
            <DocumentTabs />
            <div className="flex-1 min-h-0 flex bg-[#383838]">
              <div className="ml-auto w-[44px] flex flex-col items-center justify-between bg-[#2a2a2a] py-[12px]">
                <Chevron dir="up" className="size-[22px] text-[#777]" />
                <span className="w-[42px] h-[68px] rounded-[20px] bg-[#414141]" />
                <Chevron className="size-[22px] text-[#777]" />
              </div>
            </div>
            <StatusBar />
          </main>
          <aside className="w-[223px] shrink-0 flex gap-[2px] border-l-[7px] border-[#242424] bg-[#323232]">
            <Dock groups={LEFT_DOCK} />
            <Dock groups={RIGHT_DOCK} />
          </aside>
        </div>
      </div>
      <FilterGallery />
    </div>
  );
}
